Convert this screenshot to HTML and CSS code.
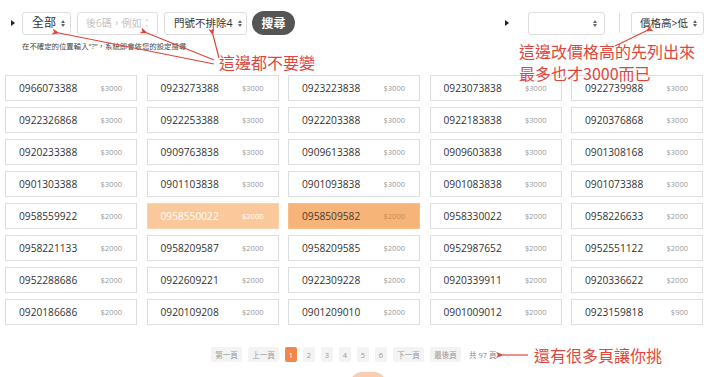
FILE: index.html
```html
<!DOCTYPE html>
<html lang="zh-Hant">
<head>
    <meta charset="UTF-8">
    <meta name="viewport" content="width=device-width, initial-scale=1.0">
    <title>門號搜尋</title>
    <link rel="stylesheet" href="styles.css">
</head>
<body>
    <!-- Search toolbar -->
    <div class="toolbar">
        <div class="search-left">
            <div class="controls">
                <span class="caret"></span>
                <div class="select select-all">全部 <span class="updown"></span></div>
                <div class="input">後6碼，例如：</div>
                <div class="select select-four">門號不排除4 <span class="updown"></span></div>
                <button class="btn-search">搜尋</button>
            </div>
            <p class="hint">在不確定的位置輸入"?"，系統即會依您的設定搜尋</p>
        </div>
        <div class="search-right">
            <span class="caret"></span>
            <div class="select select-blank"><span class="updown"></span></div>
            <span class="divider"></span>
            <div class="select select-sort">價格高&gt;低 <span class="updown"></span></div>
        </div>
    </div>

    <!-- Number list -->
    <div class="numbers">
        <div class="num"><span>0966073388</span><em>$3000</em></div>
        <div class="num"><span>0923273388</span><em>$3000</em></div>
        <div class="num"><span>0923223838</span><em>$3000</em></div>
        <div class="num"><span>0923073838</span><em>$3000</em></div>
        <div class="num"><span>0922739988</span><em>$3000</em></div>

        <div class="num"><span>0922326868</span><em>$3000</em></div>
        <div class="num"><span>0922253388</span><em>$3000</em></div>
        <div class="num"><span>0922203388</span><em>$3000</em></div>
        <div class="num"><span>0922183838</span><em>$3000</em></div>
        <div class="num"><span>0920376868</span><em>$3000</em></div>

        <div class="num"><span>0920233388</span><em>$3000</em></div>
        <div class="num"><span>0909763838</span><em>$3000</em></div>
        <div class="num"><span>0909613388</span><em>$3000</em></div>
        <div class="num"><span>0909603838</span><em>$3000</em></div>
        <div class="num"><span>0901308168</span><em>$3000</em></div>

        <div class="num"><span>0901303388</span><em>$3000</em></div>
        <div class="num"><span>0901103838</span><em>$3000</em></div>
        <div class="num"><span>0901093838</span><em>$3000</em></div>
        <div class="num"><span>0901083838</span><em>$3000</em></div>
        <div class="num"><span>0901073388</span><em>$3000</em></div>

        <div class="num"><span>0958559922</span><em>$2000</em></div>
        <div class="num num-light"><span>0958550022</span><em>$2000</em></div>
        <div class="num num-hot"><span>0958509582</span><em>$2000</em></div>
        <div class="num"><span>0958330022</span><em>$2000</em></div>
        <div class="num"><span>0958226633</span><em>$2000</em></div>

        <div class="num"><span>0958221133</span><em>$2000</em></div>
        <div class="num"><span>0958209587</span><em>$2000</em></div>
        <div class="num"><span>0958209585</span><em>$2000</em></div>
        <div class="num"><span>0952987652</span><em>$2000</em></div>
        <div class="num"><span>0952551122</span><em>$2000</em></div>

        <div class="num"><span>0952288686</span><em>$2000</em></div>
        <div class="num"><span>0922609221</span><em>$2000</em></div>
        <div class="num"><span>0922309228</span><em>$2000</em></div>
        <div class="num"><span>0920339911</span><em>$2000</em></div>
        <div class="num"><span>0920336622</span><em>$2000</em></div>

        <div class="num"><span>0920186686</span><em>$2000</em></div>
        <div class="num"><span>0920109208</span><em>$2000</em></div>
        <div class="num"><span>0901209010</span><em>$2000</em></div>
        <div class="num"><span>0901009012</span><em>$2000</em></div>
        <div class="num"><span>0923159818</span><em>$900</em></div>
    </div>

    <!-- Pagination -->
    <div class="pager">
        <a class="page wide">第一頁</a>
        <a class="page wide">上一頁</a>
        <a class="page current">1</a>
        <a class="page">2</a>
        <a class="page">3</a>
        <a class="page">4</a>
        <a class="page">5</a>
        <a class="page">6</a>
        <a class="page wide">下一頁</a>
        <a class="page wide">最後頁</a>
        <span class="total">共 97 頁</span>
    </div>
    <div class="more-btn"></div>

    <!-- Annotations -->
    <svg class="arrows" width="720" height="377" viewBox="0 0 720 377">
        <defs>
            <marker id="head" markerWidth="8" markerHeight="6" refX="1" refY="3" orient="auto-start-reverse" markerUnits="userSpaceOnUse">
                <path d="M0,3 L8,0 L6,3 L8,6 Z" fill="#e0463c"/>
            </marker>
        </defs>
        <line x1="214" y1="64" x2="59" y2="33" stroke="#e0463c" stroke-width="1.2" marker-end="url(#head)"/>
        <line x1="214" y1="60" x2="147" y2="33" stroke="#e0463c" stroke-width="1.2" marker-end="url(#head)"/>
        <line x1="219" y1="58" x2="213" y2="35" stroke="#e0463c" stroke-width="1.2" marker-end="url(#head)"/>
        <line x1="615" y1="46" x2="646" y2="31" stroke="#e0463c" stroke-width="1.2" marker-end="url(#head)"/>
        <line x1="528" y1="355" x2="503" y2="355" stroke="#e0463c" stroke-width="1.2" marker-end="url(#head)"/>
    </svg>
    <span class="note note-keep">這邊都不要變</span>
    <span class="note note-sort">這邊改價格高的先列出來<br>最多也才3000而已</span>
    <span class="note note-pages">還有很多頁讓你挑</span>
</body>
</html>
```

FILE: styles.css
```css
* {
    margin: 0;
    padding: 0;
    box-sizing: border-box;
}

body {
    font-family: 'Open Sans', 'Noto Sans CJK TC', sans-serif;
    background: #fff;
    color: #333;
    width: 720px;
    position: relative;
    overflow: hidden;
}

/* Toolbar */
.toolbar {
    display: flex;
    justify-content: space-between;
    padding: 11px 16px 0 11px;
    height: 75px;
}

.controls,
.search-right {
    display: flex;
    align-items: center;
    height: 24px;
}

.caret {
    width: 0;
    height: 0;
    border-top: 3px solid transparent;
    border-bottom: 3px solid transparent;
    border-left: 4px solid #222;
    margin-right: 7px;
}

.select,
.input {
    height: 23px;
    border: 1px solid #ddd;
    border-radius: 3px;
    display: flex;
    align-items: center;
    justify-content: space-between;
    font-size: 12px;
    line-height: 1;
    padding: 0 6px 0 9px;
    color: #333;
    white-space: nowrap;
    flex-shrink: 0;
}

.updown {
    position: relative;
    display: inline-block;
    width: 5px;
    height: 7px;
    margin-left: 5px;
}

.updown::before,
.updown::after {
    content: "";
    position: absolute;
    left: 0;
    border-left: 2.5px solid transparent;
    border-right: 2.5px solid transparent;
}

.updown::before {
    top: 0;
    border-bottom: 3px solid #666;
}

.updown::after {
    bottom: 0;
    border-top: 3px solid #666;
}

.select-all {
    width: 49px;
}

.input {
    width: 81px;
    margin-left: 6px;
    color: #c4c4c4;
    font-size: 10px;
    padding: 0 0 0 8px;
    overflow: hidden;
    justify-content: flex-start;
}

.select-four {
    width: 83px;
    margin-left: 6px;
    font-size: 10.5px;
}

.btn-search {
    width: 43px;
    height: 24px;
    margin-left: 5px;
    border: none;
    border-radius: 12px;
    background: #555;
    color: #fff;
    font-family: inherit;
    font-size: 12px;
    font-weight: bold;
}

.hint {
    font-size: 7.4px;
    color: #444;
    margin: 5px 0 0 11px;
}

.search-right .caret {
    margin-right: 19px;
}

.select-blank {
    width: 77px;
    justify-content: flex-end;
}

.divider {
    width: 1px;
    height: 20px;
    background: #ddd;
    margin: 0 11px 0 14px;
}

.select-sort {
    width: 73px;
    font-size: 10.5px;
    padding-left: 8px;
}

/* Numbers */
.numbers {
    display: grid;
    grid-template-columns: repeat(5, 132px);
    column-gap: 9.5px;
    row-gap: 6px;
    padding-left: 5px;
}

.num {
    height: 26px;
    border: 1px solid #ddd;
    display: flex;
    align-items: center;
    justify-content: space-between;
    padding: 0 14px 0 13px;
    background: #fff;
}

.num span {
    font-size: 10.2px;
    color: #333;
}

.num em {
    font-style: normal;
    font-size: 7.5px;
    color: #999;
}

.num-light {
    background: #fbc89c;
    border-color: #fbd2ae;
}

.num-light span,
.num-light em {
    color: #fff;
}

.num-hot {
    background: #f6b479;
    border-color: #f6bd8a;
}

.num-hot span {
    color: #4a3a30;
}

.num-hot em {
    color: #c98a55;
}

/* Pagination */
.pager {
    display: flex;
    align-items: center;
    gap: 6px;
    padding-left: 211px;
    margin-top: 22px;
}

.page {
    height: 15px;
    min-width: 12px;
    background: #f3f3f3;
    color: #999;
    font-size: 7.5px;
    display: flex;
    align-items: center;
    justify-content: center;
    border-radius: 2px;
}

.page.wide {
    width: 31px;
}

.page.current {
    background: #f0874b;
    color: #fff;
}

.total {
    font-size: 7.5px;
    color: #888;
    margin-left: 2px;
}

.more-btn {
    width: 36px;
    height: 20px;
    margin: 10px 0 0 350px;
    border-radius: 12px 12px 0 0;
    background: #f9cdb0;
}

/* Annotations */
.arrows {
    position: absolute;
    left: 0;
    top: 0;
    pointer-events: none;
}

.note {
    position: absolute;
    color: #e0463c;
    font-size: 16px;
    line-height: 22px;
    font-family: 'Noto Sans CJK TC', sans-serif;
    white-space: nowrap;
}

.note-keep {
    left: 219px;
    top: 51px;
}

.note-sort {
    left: 519px;
    top: 40px;
    line-height: 22px;
}

.note-pages {
    left: 534px;
    top: 344px;
}
```
